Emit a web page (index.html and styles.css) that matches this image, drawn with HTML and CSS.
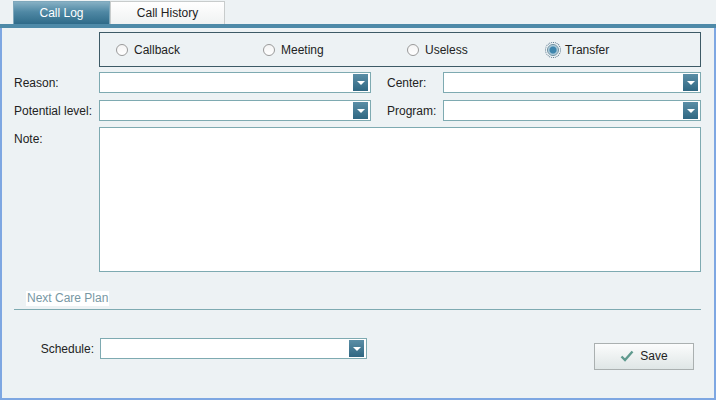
FILE: index.html
```html
<!DOCTYPE html>
<html>
<head>
<meta charset="utf-8">
<link rel="stylesheet" href="styles.css">
</head>
<body>
<div class="tabs">
  <div class="tab active">Call Log</div>
  <div class="tab">Call History</div>
</div>
<div class="strip"></div>
<div class="panel">
  <div class="radio-box">
    <label class="radio r1"><span class="dot"></span>Callback</label>
    <label class="radio r2"><span class="dot"></span>Meeting</label>
    <label class="radio r3"><span class="dot"></span>Useless</label>
    <label class="radio r4"><span class="dot checked"></span>Transfer</label>
  </div>
  <div class="row">
    <div class="lbl">Reason:</div>
    <div class="select s-left"><span class="btn"></span></div>
    <div class="lbl2">Center:</div>
    <div class="select s-right"><span class="btn"></span></div>
  </div>
  <div class="row">
    <div class="lbl">Potential level:</div>
    <div class="select s-left"><span class="btn"></span></div>
    <div class="lbl2">Program:</div>
    <div class="select s-right"><span class="btn"></span></div>
  </div>
  <div class="row note-row">
    <div class="lbl note-lbl">Note:</div>
    <div class="textarea"></div>
  </div>
  <div class="section">
    <span class="section-title">Next Care Plan</span>
  </div>
  <div class="bottom">
    <div class="sched-lbl">Schedule:</div>
    <div class="select s-sched"><span class="btn"></span></div>
    <div class="spacer"></div>
    <button class="save"><svg width="14" height="12" viewBox="0 0 14 12"><path d="M1.5 6.5 L5 10 L12.5 1.5" fill="none" stroke="#5f9a8e" stroke-width="2.4"/></svg>Save</button>
  </div>
</div>
</body>
</html>
```
FILE: styles.css
```css
html, body { margin: 0; padding: 0; }
body {
  width: 716px; height: 400px; overflow: hidden;
  background: #edf2f4;
  font-family: "Liberation Sans", Arial, sans-serif;
  font-size: 12px; color: #222;
}
.tabs { display: flex; padding: 1px 0 0 13px; height: 23px; }
.tab {
  box-sizing: border-box; height: 23px; line-height: 23px; text-align: center;
  width: 115px; background: linear-gradient(#ffffff, #f0f2f2);
  border: 1px solid #c8cccc; border-bottom: none; color: #222;
}
.tab.active {
  width: 97px; color: #fff; border: 1px solid #7fa8bc; border-bottom: none;
  background: linear-gradient(#86b0c4 0%, #4f88a4 45%, #2f6b89 100%);
}
.strip { height: 4px; background: #4e8aa8; }
.panel {
  box-sizing: border-box; height: 372px;
  border: 2px solid #7ea7e2; border-top: none;
  padding: 4px 13px 0 12px;
}
.radio-box {
  box-sizing: border-box; margin-left: 85px; height: 35px;
  border: 1px solid #3d5a66; position: relative;
}
.radio { position: absolute; top: 10px; display: flex; align-items: center; color: #222; }
.r1 { left: 16px; } .r2 { left: 163px; } .r3 { left: 307px; } .r4 { left: 447px; }
.dot {
  box-sizing: border-box; width: 12px; height: 12px; border-radius: 50%;
  border: 1px solid #9a9a9a; background: linear-gradient(#f4f4f4, #ffffff);
  margin-right: 6px;
}
.dot.checked {
  border-color: #6c8fa0;
  background: radial-gradient(circle, #3f86ad 0 3px, #9fc3d6 4px, #e8f0f4 6px);
  outline: 1px dotted #4a6a80; outline-offset: 1px;
}
.row { display: flex; align-items: center; margin-top: 5px; height: 21px; }
.row + .row { margin-top: 7px; }
.lbl { width: 85px; }
.lbl2 { width: 56px; margin-left: 16px; }
.select {
  box-sizing: border-box; height: 21px; background: #fff;
  border: 1px solid #7eaab1; position: relative;
}
.s-left { width: 272px; }
.s-right { flex: 1; }
.btn {
  position: absolute; right: 2px; top: 1px; width: 15px; height: 17px;
  background: linear-gradient(#5b8ea6, #2f6782);
}
.btn::after {
  content: ""; position: absolute; left: 4px; top: 7px;
  border-left: 4px solid transparent; border-right: 4px solid transparent;
  border-top: 4px solid #fff;
}
.row.note-row { height: 145px; align-items: flex-start; margin-top: 6px; }
.note-lbl { padding-top: 5px; }
.textarea { flex: 1; height: 145px; box-sizing: border-box; background: #fff; border: 1px solid #7eaab1; }
.section {
  margin-top: 19px; height: 18px; border-bottom: 1px solid #7eaab1;
  padding-left: 12px;
}
.section-title { display: inline-block; background: #fff; color: #7898a4; padding: 0 1px; height: 15px; line-height: 15px; }
.bottom { display: flex; align-items: center; margin-top: 28px; height: 21px; }
.sched-lbl { width: 84px; text-align: right; padding-right: 4px; box-sizing: border-box; }
.s-sched { width: 267px; margin-left: 2px; }
.spacer { flex: 1; }
.save {
  box-sizing: border-box; width: 100px; height: 27px; margin-top: 15px; margin-right: 7px;
  border: 1px solid #aab0b0; background: linear-gradient(#fbfcfc, #dfe6e6);
  font-family: "Liberation Sans", Arial, sans-serif; font-size: 12px; color: #222;
  display: flex; align-items: center; justify-content: center; gap: 6px; padding: 0;
}
```
